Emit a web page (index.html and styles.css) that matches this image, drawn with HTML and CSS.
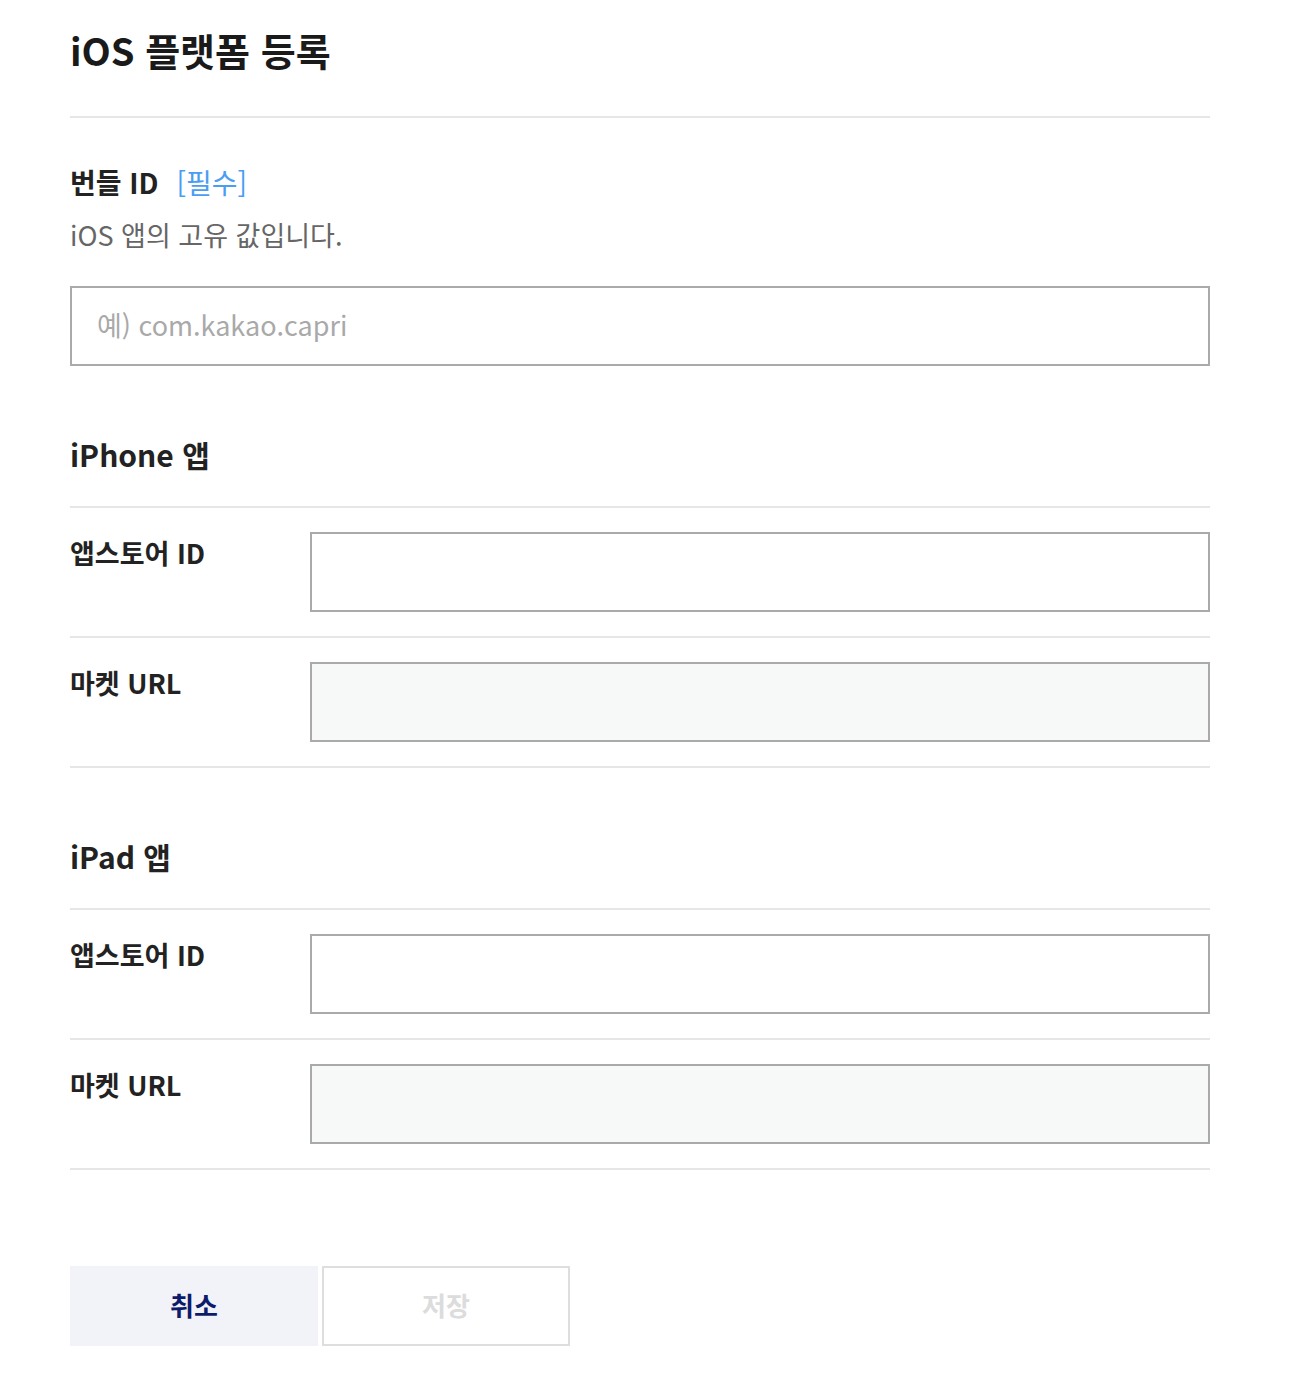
FILE: index.html
```html
<!DOCTYPE html>
<html lang="ko">
<head>
<meta charset="utf-8">
<title>iOS 플랫폼 등록</title>
<link rel="stylesheet" href="styles.css">
</head>
<body>
<div class="page">
  <header class="page-head">
    <h1 class="page-title">iOS 플랫폼 등록</h1>
  </header>

  <section class="bundle">
    <h2 class="field-title">번들 ID <span class="required">[필수]</span></h2>
    <p class="field-desc">iOS 앱의 고유 값입니다.</p>
    <input class="text-input" type="text" placeholder="예) com.kakao.capri">
  </section>

  <section class="app-group">
    <h2 class="group-title">iPhone 앱</h2>
    <div class="row">
      <label class="row-label">앱스토어 ID</label>
      <input class="text-input row-input" type="text">
    </div>
    <div class="row">
      <label class="row-label">마켓 URL</label>
      <input class="text-input row-input is-readonly" type="text" readonly>
    </div>
  </section>

  <section class="app-group">
    <h2 class="group-title">iPad 앱</h2>
    <div class="row">
      <label class="row-label">앱스토어 ID</label>
      <input class="text-input row-input" type="text">
    </div>
    <div class="row">
      <label class="row-label">마켓 URL</label>
      <input class="text-input row-input is-readonly" type="text" readonly>
    </div>
  </section>

  <div class="actions">
    <button class="btn btn-cancel" type="button">취소</button>
    <button class="btn btn-save" type="button">저장</button>
  </div>
</div>
</body>
</html>
```

FILE: styles.css
```css
* {
  box-sizing: border-box;
}

html, body {
  margin: 0;
  padding: 0;
  background: #ffffff;
}

body {
  font-family: "Noto Sans CJK KR", "Noto Sans", sans-serif;
  color: #222222;
}

.page {
  width: 1140px;
  margin-left: 70px;
}

.page-head {
  padding-top: 23px;
  padding-bottom: 39px;
  border-bottom: 2px solid #e6e6e6;
}

.page-title {
  margin: 0;
  font-size: 38px;
  line-height: 54px;
  font-weight: 700;
  color: #1a1a1a;
}

.bundle {
  padding-top: 44px;
}

.field-title {
  margin: 0;
  font-size: 28px;
  line-height: 40px;
  font-weight: 700;
  color: #222222;
}

.required {
  margin-left: 10px;
  font-weight: 400;
  color: #4a9df2;
}

.field-desc {
  margin: 14px 0 0;
  font-size: 27px;
  line-height: 38px;
  color: #666666;
}

.text-input {
  display: block;
  width: 100%;
  height: 80px;
  margin: 0;
  padding: 0 25px 4px;
  border: 2px solid #aaaaaa;
  border-radius: 0;
  background: #ffffff;
  font-family: inherit;
  font-size: 27px;
  color: #222222;
  outline: none;
}

.bundle .text-input {
  margin-top: 32px;
}

.text-input::placeholder {
  color: #a9a9a9;
}

.app-group {
  padding-top: 66px;
}

.group-title {
  margin: 0;
  padding-bottom: 30px;
  border-bottom: 2px solid #e6e6e6;
  font-size: 30px;
  line-height: 44px;
  font-weight: 700;
  color: #222222;
}

.row {
  display: flex;
  align-items: flex-start;
  padding: 24px 0;
  border-bottom: 2px solid #e6e6e6;
}

.row-label {
  flex: 0 0 240px;
  font-size: 27px;
  line-height: 42px;
  font-weight: 700;
  color: #222222;
}

.row-input {
  flex: 1 1 auto;
  width: auto;
}

.is-readonly {
  background: #f7f8f8;
}

.actions {
  display: flex;
  gap: 4px;
  margin-top: 96px;
}

.btn {
  width: 248px;
  height: 80px;
  margin: 0;
  padding: 0 0 4px;
  border-radius: 0;
  font-family: inherit;
  font-size: 26px;
  font-weight: 700;
  cursor: pointer;
}

.btn-cancel {
  border: none;
  background: #f2f3f8;
  color: #0c1c6a;
}

.btn-save {
  border: 2px solid #dedede;
  background: #ffffff;
  color: #dcdcdc;
}
```
